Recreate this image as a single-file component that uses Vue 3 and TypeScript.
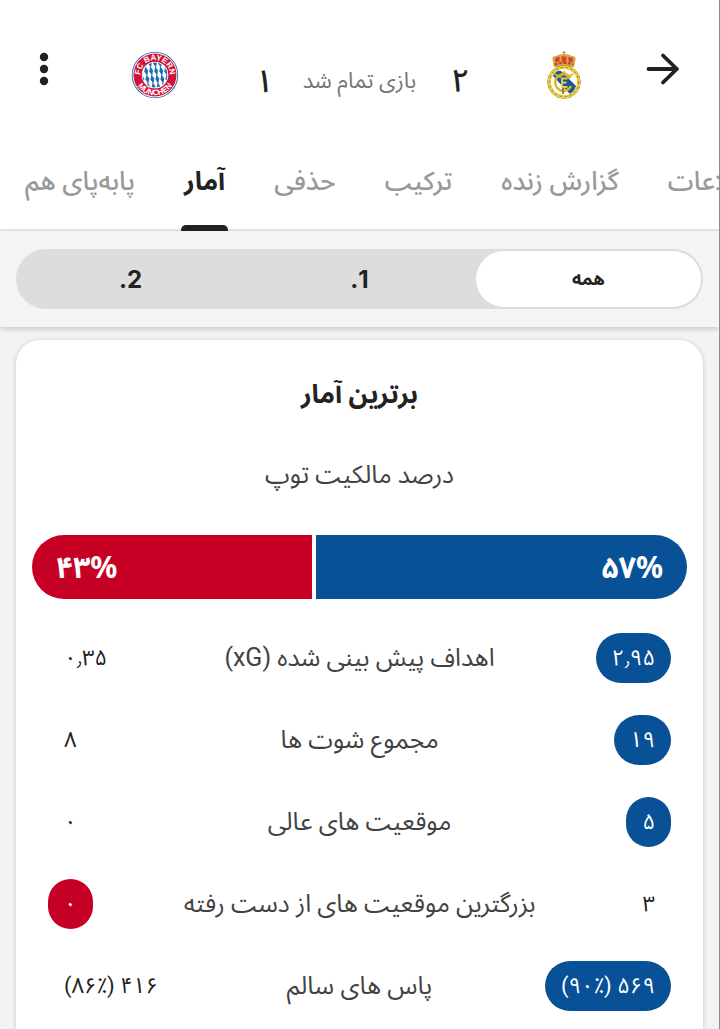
<script setup lang="ts">
import { ref } from 'vue'

interface Tab {
  id: string
  label: string
}

interface StatRow {
  label: string
  home: string
  away: string
  lead: 'home' | 'away'
}

const tabs: Tab[] = [
  { id: 'info', label: 'اطلاعات' },
  { id: 'live', label: 'گزارش زنده' },
  { id: 'lineup', label: 'ترکیب' },
  { id: 'knockout', label: 'حذفی' },
  { id: 'stats', label: 'آمار' },
  { id: 'h2h', label: 'پابه‌پای هم' },
]
const activeTab = ref('stats')

const periods: Tab[] = [
  { id: 'all', label: 'همه' },
  { id: 'first', label: '1.' },
  { id: 'second', label: '2.' },
]
const period = ref('all')

const possession = { home: 57, away: 43 }
const possessionStyle = {
  gridTemplateColumns: `${possession.home}fr ${possession.away}fr`,
}

const lozenges = Array.from({ length: 32 }, (_, i) => {
  const row = Math.floor(i / 8)
  return { x: (i % 8) * 5 + row * 1.2 + 4, y: row * 8 + 12 }
})

const rows: StatRow[] = [
  { label: 'اهداف پیش بینی شده (xG)', home: '۲٫۹۵', away: '۰٫۳۵', lead: 'home' },
  { label: 'مجموع شوت ها', home: '۱۹', away: '۸', lead: 'home' },
  { label: 'موقعیت های عالی', home: '۵', away: '۰', lead: 'home' },
  { label: 'بزرگترین موقعیت های از دست رفته', home: '۳', away: '۰', lead: 'away' },
  { label: 'پاس های سالم', home: '۵۶۹ (۹۰٪)', away: '۴۱۶ (۸۶٪)', lead: 'home' },
]
</script>

<template>
  <div class="page" dir="rtl" lang="fa">
    <header class="top">
      <div class="match">
        <button class="icon-btn back" type="button" aria-label="بازگشت">
          <svg width="36" height="36" viewBox="0 0 36 36" fill="none" stroke="#222" stroke-width="3.8" stroke-linecap="round" stroke-linejoin="round">
            <path d="M3.500 18H32M18 4.500L31.800 18L18 31.500" />
          </svg>
        </button>
        <svg class="crest" width="36" height="48" viewBox="0 0 36 48" role="img" aria-label="رئال مادرید">
          <path d="M8 16L6.500 8.500Q6 5 10 5Q13 3 18 3Q23 3 26 5Q30 5 29.500 8.500L28 16Z" fill="#d9a441" />
          <path d="M9 8Q11 5 14 6.500L13 11H9.500ZM15.500 5.500H20.500L20 11H16ZM22 6.500Q25 5 27 8L26.500 11H23Z" fill="#d8402f" />
          <path d="M8.500 13.500Q18 10.500 27.500 13.500" fill="none" stroke="#c43a2c" stroke-width="2" stroke-dasharray="3 1.500" />
          <path d="M18 0V4M16.500 1.500H19.500" stroke="#b98a2c" stroke-width="1" />
          <circle cx="18" cy="31" r="16.300" fill="#fff" stroke="#8b8035" stroke-width="1" />
          <path d="M7 25Q10 19 15 20L30 35Q28 41 24 43Q16 35 7 25Z" fill="#1b5796" />
          <circle cx="18" cy="31" r="14.600" fill="none" stroke="#efcf3f" stroke-width="3.200" />
          <circle cx="18" cy="31" r="14.600" fill="none" stroke="#7d7948" stroke-width="1" stroke-dasharray="2 3" />
          <path d="M9 23L14 26L18 21L22 26L27 23" fill="none" stroke="#d9b52f" stroke-width="2" />
          <path d="M24.500 27A8.300 8.300 0 1 0 25 35" fill="none" stroke="#d9b52f" stroke-width="2.400" />
          <path d="M21.500 27.500H16V36H21.500M16 31.500H20.500" fill="none" stroke="#e6cd4a" stroke-width="1.800" />
          <path d="M17 37V43" stroke="#8b8035" stroke-width="2" />
        </svg>
        <strong class="score">۲</strong>
        <span class="status">بازی تمام شد</span>
        <strong class="score away-score">۱</strong>
        <svg class="crest" width="48" height="48" viewBox="0 0 48 48" role="img" aria-label="بایرن مونیخ">
          <defs>
            <path id="arc-top" d="M9.200 24A14.800 14.800 0 0 1 38.800 24" />
            <path id="arc-bottom" d="M3.700 24A20.300 20.300 0 0 0 44.300 24" />
            <clipPath id="core"><circle cx="24" cy="24" r="12.500" /></clipPath>
          </defs>
          <circle cx="24" cy="24" r="23.300" fill="#2f6fae" />
          <circle cx="24" cy="24" r="22.400" fill="#fff" />
          <circle cx="24" cy="24" r="21.500" fill="#d3123a" />
          <circle cx="24" cy="24" r="13.300" fill="#fff" />
          <g clip-path="url(#core)" fill="#1c6eb4">
            <path v-for="(cell, i) in lozenges" :key="i" :transform="`translate(${cell.x} ${cell.y})`" d="M-1 -4.800L1.900 -0.600L1 4.800L-1.900 0.600Z" />
          </g>
          <g class="crest-text" direction="ltr">
            <text><textPath href="#arc-top" startOffset="50%" text-anchor="middle">FC BAYERN</textPath></text>
            <text><textPath href="#arc-bottom" startOffset="50%" text-anchor="middle">MÜNCHEN</textPath></text>
          </g>
        </svg>
        <button class="icon-btn menu" type="button" aria-label="گزینه ها">
          <svg width="12" height="36" viewBox="0 0 12 36" fill="#222">
            <circle cx="6" cy="6" r="4.200" />
            <circle cx="6" cy="18" r="4.200" />
            <circle cx="6" cy="30" r="4.200" />
          </svg>
        </button>
      </div>
      <nav class="tabs">
        <button
          v-for="tab in tabs"
          :key="tab.id"
          type="button"
          class="tab"
          :class="{ active: tab.id === activeTab }"
          @click="activeTab = tab.id"
        >{{ tab.label }}</button>
      </nav>
    </header>

    <div class="filter">
      <div class="segments">
        <button
          v-for="item in periods"
          :key="item.id"
          type="button"
          class="segment"
          :class="{ active: item.id === period }"
          :aria-pressed="item.id === period"
          @click="period = item.id"
        >{{ item.label }}</button>
      </div>
    </div>

    <main class="content">
      <section class="card">
        <h2 class="title">برترین آمار</h2>
        <h3 class="subtitle">درصد مالکیت توپ</h3>
        <div class="possession" :style="possessionStyle">
          <div class="share home"><span dir="ltr">۵۷%</span></div>
          <div class="share away"><span dir="ltr">۴۳%</span></div>
        </div>
        <table class="stats">
          <tbody>
            <tr v-for="row in rows" :key="row.label" class="stat">
              <td class="cell"><span class="value" :class="{ 'lead-home': row.lead === 'home' }">{{ row.home }}</span></td>
              <th class="label" scope="row">{{ row.label }}</th>
              <td class="cell end"><span class="value" :class="{ 'lead-away': row.lead === 'away' }">{{ row.away }}</span></td>
            </tr>
          </tbody>
        </table>
      </section>
    </main>
  </div>
</template>

<style>
body {
  margin: 0;
  background: #f3f3f3;
}
</style>

<style scoped>
.page {
  box-sizing: border-box;
  height: 100vh;
  overflow: hidden;
  display: flex;
  flex-direction: column;
  background: #f3f3f3;
  border-right: 1px solid #8c8c8c;
  color: #222;
  font-family: Roboto, "Noto Sans Arabic", "DejaVu Sans", sans-serif;
  font-size: 22px;
}

button {
  border: 0;
  padding: 0;
  background: none;
  color: inherit;
  font: inherit;
  cursor: pointer;
}

.top {
  flex: none;
  background: #fff;
  border-bottom: 2px solid #e6e6e6;
}

.match {
  display: grid;
  grid-template-columns: 80px 1fr 60px 140px 60px 1fr 80px;
  align-items: center;
  justify-items: center;
  height: 102px;
  padding-top: 24px;
}

.icon-btn {
  display: flex;
  margin-bottom: 12px;
}

.back {
  justify-self: start;
  margin-right: 38px;
}

.menu {
  justify-self: end;
  margin-left: 38px;
}

.score {
  justify-self: start;
  margin-right: 20px;
  padding-top: 12px;
  font-size: 32px;
  line-height: 40px;
  font-weight: 500;
}

.away-score {
  margin-right: 16px;
}

.status {
  padding-top: 12px;
  color: #757575;
  white-space: nowrap;
}

.crest-text {
  fill: #fff;
  font-family: "Liberation Sans", sans-serif;
  font-size: 8px;
  font-weight: 700;
}

.tabs {
  display: flex;
  justify-content: flex-end;
  gap: 49px;
  height: 103px;
  padding-left: 25px;
}

.tab {
  position: relative;
  flex: none;
  padding-top: 8px;
  color: #999;
  font-size: 26px;
  font-weight: 500;
  white-space: nowrap;
}

.tab.active {
  color: #222;
  font-weight: 700;
}

.tab.active::after {
  content: "";
  position: absolute;
  right: -3px;
  bottom: -2px;
  left: -3px;
  height: 6px;
  border-radius: 5px 5px 0 0;
  background: #222;
}

.filter {
  position: relative;
  flex: none;
  padding: 18px 16px;
  background: #f4f4f4;
  box-shadow: 0 2px 5px rgba(0, 0, 0, 0.18);
}

.segments {
  display: grid;
  grid-template-columns: repeat(3, 1fr);
  gap: 4px;
  padding: 2px;
  border-radius: 30px;
  background: #ddd;
}

.segment {
  height: 56px;
  border-radius: 28px;
  font-family: Inter, Roboto, "Noto Sans Arabic", "DejaVu Sans", sans-serif;
  font-size: 24px;
  font-weight: 700;
}

.segment.active {
  background: #fff;
  font-size: 18px;
}

.content {
  flex: 1;
  padding: 13px 16px 0;
}

.card {
  box-sizing: border-box;
  min-height: 100%;
  padding: 34px 16px 0;
  border-radius: 24px 24px 0 0;
  background: #fff;
  box-shadow: 0 1px 5px rgba(0, 0, 0, 0.2);
}

.title,
.subtitle {
  margin: 0;
  line-height: 40px;
  text-align: center;
}

.title {
  font-size: 26px;
  font-weight: 700;
}

.subtitle {
  margin-top: 41px;
  color: #424242;
  font-size: 25px;
  font-weight: 400;
}

.possession {
  display: grid;
  gap: 4px;
  margin-top: 40px;
}

.share {
  display: flex;
  align-items: center;
  height: 64px;
  padding: 0 24px;
  color: #fff;
  font-family: "Noto Sans", Roboto, "Noto Sans Arabic", "DejaVu Sans", sans-serif;
  font-size: 30px;
  line-height: 40px;
  font-weight: 700;
}

.home {
  border-radius: 0 32px 32px 0;
  background: #095197;
}

.away {
  justify-content: flex-end;
  border-radius: 32px 0 0 32px;
  background: #c60024;
}

.stats {
  display: block;
  margin-top: 18px;
}

.stats tbody {
  display: block;
}

.stat {
  display: grid;
  grid-template-columns: 1fr auto 1fr;
  align-items: center;
  height: 82px;
  padding: 0 16px;
}

.cell {
  display: flex;
  min-width: 0;
  padding: 0;
}

.end {
  justify-content: flex-end;
}

.value {
  height: 50px;
  padding: 0 16px;
  border-radius: 25px;
  line-height: 50px;
  white-space: nowrap;
}

.label {
  padding: 0;
  color: #424242;
  font-size: 25px;
  font-weight: 400;
  white-space: nowrap;
}

.lead-home {
  background: #095197;
  color: #fff;
}

.lead-away {
  background: #c60024;
  color: #fff;
}
</style>
